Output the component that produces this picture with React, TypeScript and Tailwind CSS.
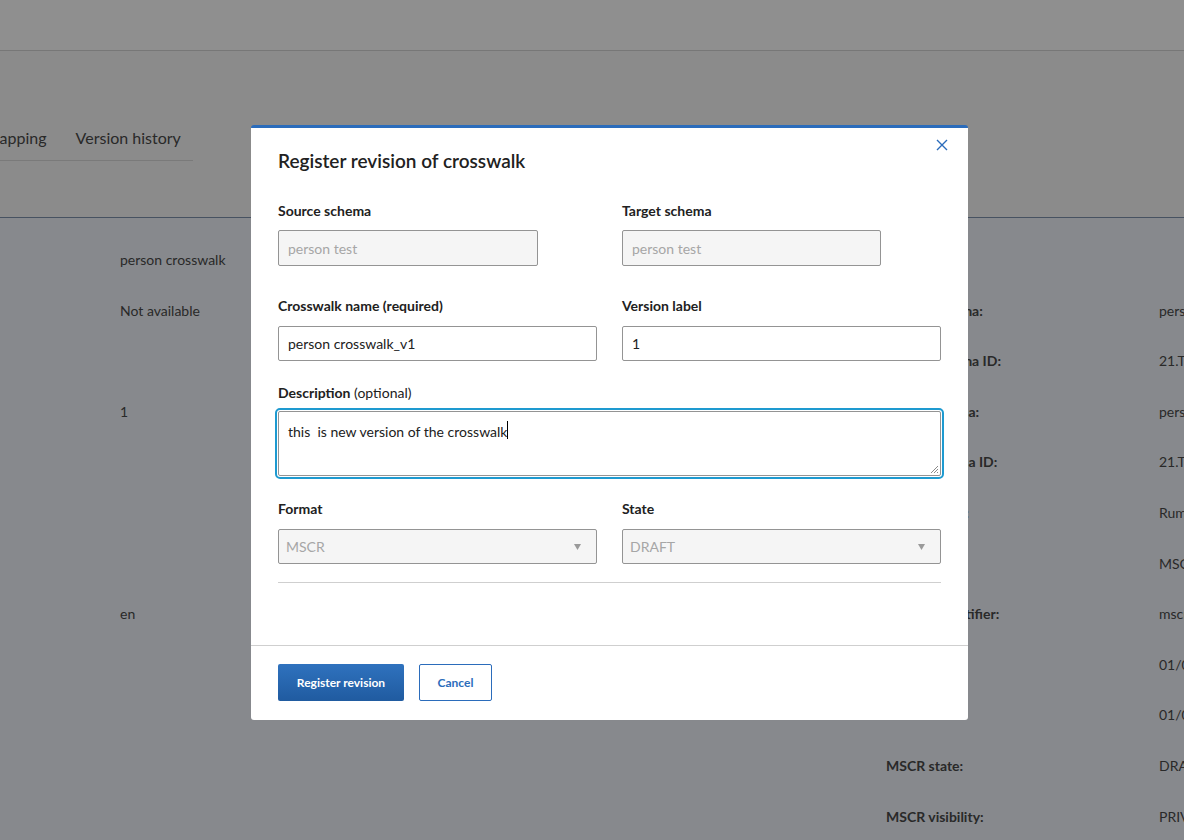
import React from "react";

const font = { fontFamily: "Lato, 'Noto Sans', sans-serif" };

const rows: [string, string, string][] = [
  ["person crosswalk", "", ""],
  ["Not available", "Source schema:", "person test"],
  ["", "Source schema ID:", "21.T13999/EOSC-202401000123"],
  ["1", "Target schema:", "person test"],
  ["", "Target schema ID:", "21.T13999/EOSC-202401000124"],
  ["", "Contributors:", "Rumana Ahmed"],
  ["", "Format:", "MSCR"],
  ["en", "Original identifier:", "mscr:crosswalk:4a1e"],
  ["", "Created:", "01/02/2024"],
  ["", "Modified:", "01/02/2024"],
  ["", "MSCR state:", "DRAFT"],
  ["", "MSCR visibility:", "PRIVATE"],
];

const Label = ({ children, tight }: { children: React.ReactNode; tight?: boolean }) => (
  <div className={`text-[14px] leading-5 font-bold text-[#212121] ${tight ? "mb-[9px]" : "mb-[10px]"}`}>{children}</div>
);

const Select = ({ value }: { value: string }) => (
  <div className="h-[35px] border border-[#949494] rounded-[2px] bg-[#f5f5f5] flex items-center justify-between pl-[7px] pr-[15px]">
    <span className="text-[14px] text-[#a6a6a6]">{value}</span>
    <svg width="7" height="6" viewBox="0 0 7 6">
      <path d="M0 0h7L3.5 6z" fill="#9a9a9a" />
    </svg>
  </div>
);

export default function App() {
  return (
    <div className="relative w-[1184px] h-[840px] overflow-hidden bg-[#f1f5fb]" style={font}>
      {/* page behind the dialog */}
      <div className="h-[51px] bg-white border-b border-[#d4d4d4]" />
      <div className="h-[167px] bg-[#f8f8f8] border-b border-[#7f93ad] flex flex-col justify-end pb-[56px]">
        <div className="w-[208px] border-b border-[#dadada] flex gap-[29px] text-[16px] text-[#4a4a4a] leading-5 pb-[12px] -ml-[15px] whitespace-nowrap">
          <span>Mapping</span>
          <span>Version history</span>
        </div>
      </div>
      <div className="pt-[32px] pl-[120px] grid grid-cols-[766px_273px_200px] text-[14px] leading-5 text-[#4a4a4a] whitespace-nowrap">
        {rows.map(([a, b, c], i) => (
          <React.Fragment key={i}>
            <div className="h-[50.6px]">{a}</div>
            <div className="h-[50.6px] font-bold">{b}</div>
            <div className="h-[50.6px]">{c}</div>
          </React.Fragment>
        ))}
      </div>

      {/* overlay */}
      <div className="absolute inset-0 bg-black/[0.44]" />

      {/* dialog */}
      <div className="absolute left-[251px] top-[125px] w-[717px] bg-white rounded-[3px] border-t-[3px] border-[#2b6cbb]">
        <button className="absolute top-[11px] right-[20px] text-[#2b6cbb]">
          <svg width="12" height="12" viewBox="0 0 12 12">
            <path d="M1 1l10 10M11 1L1 11" stroke="currentColor" strokeWidth="1.4" />
          </svg>
        </button>
        <div className="px-[27px] pt-[21px] pb-[62px]">
          <h2 className="text-[19px] leading-6 font-semibold text-[#212121]">Register revision of crosswalk</h2>

          <div className="mt-[28px] grid grid-cols-2 gap-x-[25px]">
            <div>
              <Label tight>Source schema</Label>
              <div className="w-[260px] h-[36px] border border-[#949494] rounded-[2px] bg-[#f5f5f5] flex items-center px-[9px] text-[14px] text-[#a6a6a6]">person test</div>
            </div>
            <div>
              <Label tight>Target schema</Label>
              <div className="w-[259px] h-[36px] border border-[#949494] rounded-[2px] bg-[#f5f5f5] flex items-center px-[9px] text-[14px] text-[#a6a6a6]">person test</div>
            </div>
          </div>

          <div className="mt-[30px] grid grid-cols-2 gap-x-[25px]">
            <div>
              <Label>Crosswalk name (required)</Label>
              <div className="h-[35px] border border-[#949494] rounded-[2px] flex items-center px-[9px] text-[14px] text-[#212121]">person crosswalk_v1</div>
            </div>
            <div>
              <Label>Version label</Label>
              <div className="h-[35px] border border-[#949494] rounded-[2px] flex items-center px-[9px] text-[14px] text-[#212121]">1</div>
            </div>
          </div>

          <div className="mt-[22px]">
            <div className="text-[14px] leading-5 text-[#212121] mb-[8px]">
              <span className="font-bold">Description</span> (optional)
            </div>
            <div className="relative h-[65px] border border-[#949494] rounded-[2px] outline-2 outline-offset-1 outline-[#1e9ad0] px-[9px] pt-[9px] text-[14px] text-[#212121] whitespace-pre flex items-start">
              <span>this  is new version of the crosswalk</span>
              <span className="inline-block w-px h-[18px] bg-black" />
              <svg className="absolute right-[1px] bottom-[1px]" width="10" height="10" viewBox="0 0 10 10">
                <path d="M9 2L2 9M9 5L5 9M9 8L8 9" stroke="#8a8a8a" strokeWidth="1" />
              </svg>
            </div>
          </div>

          <div className="mt-[23px] grid grid-cols-2 gap-x-[25px]">
            <div>
              <Label>Format</Label>
              <Select value="MSCR" />
            </div>
            <div>
              <Label>State</Label>
              <Select value="DRAFT" />
            </div>
          </div>

          <hr className="mt-[18px] border-t border-[#cfcfcf]" />
        </div>

        <div className="border-t border-[#cfcfcf] px-[27px] pt-[18px] pb-[19px] flex gap-[15px]">
          <button className="w-[126px] h-[37px] rounded-[2px] bg-gradient-to-b from-[#2f72be] to-[#205ba0] text-white text-[12px] font-bold">
            Register revision
          </button>
          <button className="w-[73px] h-[37px] rounded-[2px] bg-white border border-[#2b6cbb] text-[#2b6cbb] text-[12px] font-bold">
            Cancel
          </button>
        </div>
      </div>
    </div>
  );
}
